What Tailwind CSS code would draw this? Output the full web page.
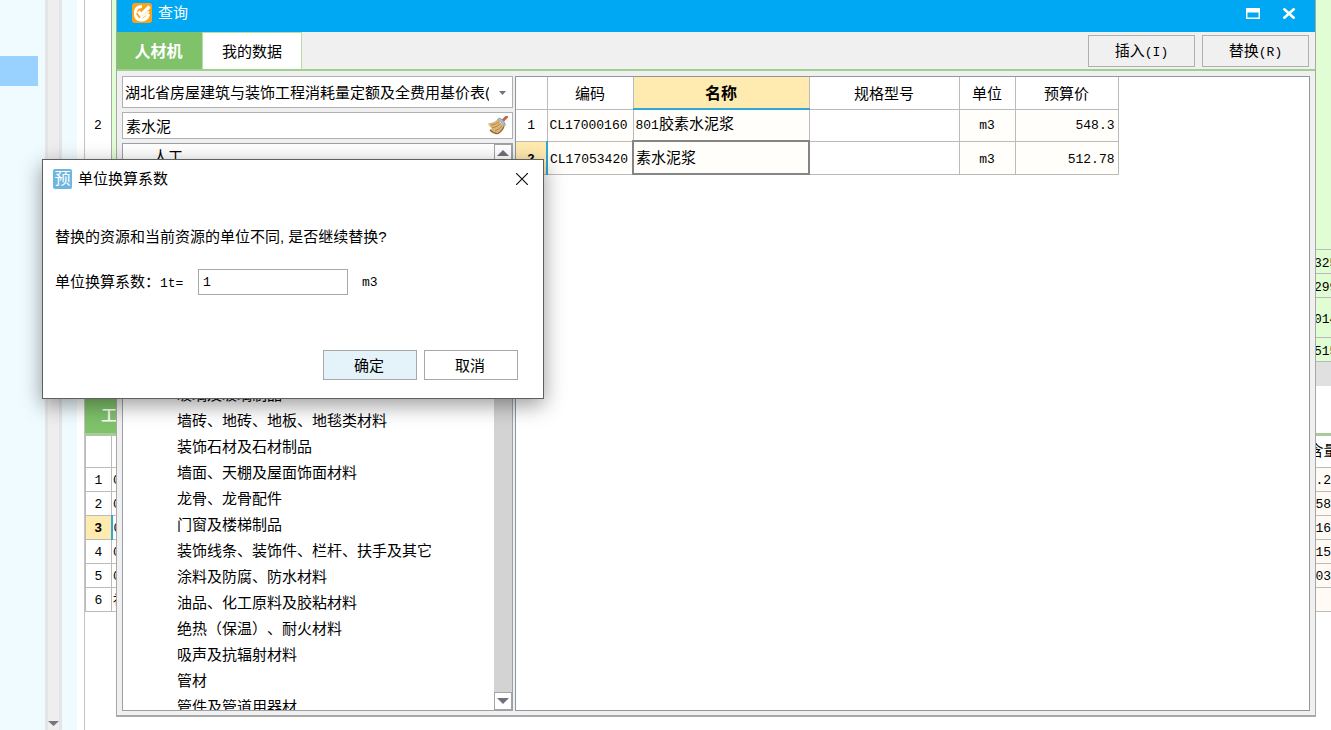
<!DOCTYPE html>
<html lang="zh-CN">
<head>
<meta charset="utf-8">
<title>查询</title>
<script src="https://cdn.jsdelivr.net/npm/@tailwindcss/browser@4"></script>
</head>
<body class="relative h-screen overflow-hidden bg-white font-['Liberation_Sans','Noto_Sans_CJK_SC',sans-serif] text-[15px] leading-5 text-black [text-spacing-trim:space-all]">

<!-- Main application behind the windows -->
<main class="flex h-full">
  <nav class="w-[45px] shrink-0 bg-[#effbff] pt-14"><div class="h-[30px] w-[38px] bg-[#99d1ff]"></div></nav>
  <div class="flex w-[17px] shrink-0 flex-col justify-end border-x-3 border-[#e5e4e6] bg-[#eeeeef] pb-1">
    <svg class="h-[5px] w-[11px]" viewBox="0 0 11 5"><path d="M0 0h11L5.500 5z" fill="#77757f"/></svg>
  </div>
  <div class="w-[15px] shrink-0 bg-[#effbff]"></div>
  <div class="w-[7px] shrink-0"></div>
  <section class="flex min-w-0 flex-1 flex-col border-l border-[#c4c4c4] font-['Liberation_Mono','Noto_Sans_CJK_SC',monospace] text-[13px]">
    <div class="flex h-[250px] shrink-0">
      <div class="flex w-[27px] items-center justify-center border-r border-[#aaa] pt-0.5">2</div>
      <div class="flex-1 border-b border-[#bcbcbc] bg-[#e1fdd3]"></div>
    </div>
    <div class="flex h-[112px] shrink-0">
      <div class="w-[27px] border-r border-[#aaa]"></div>
      <div class="flex flex-1 flex-col bg-[#e1fdd3]">
        <div class="flex h-6 items-center justify-end border-b border-[#b8b8b8] pt-1"><span class="w-[17px]">325</span></div>
        <div class="flex h-6 items-center justify-end border-b border-[#b8b8b8] pt-1"><span class="w-[17px]">299</span></div>
        <div class="flex h-10 items-center justify-end border-b border-[#b8b8b8] pt-1"><span class="w-[17px]">014</span></div>
        <div class="flex h-6 items-center justify-end border-b border-[#b8b8b8] pt-1"><span class="w-[17px]">515</span></div>
      </div>
    </div>
    <div class="h-6 shrink-0 bg-[#e0e0e0]"></div>
    <div class="flex h-[49px] shrink-0 items-end border-b-2 border-[#9fd08d]">
      <div class="h-9 w-[120px] bg-[#7fc26a] pt-2 pl-4 text-base font-medium text-white">工料机</div>
    </div>
    <table class="w-full shrink-0 table-fixed border-collapse text-center">
      <colgroup><col class="w-[26px]"><col><col class="w-[23px]"></colgroup>
      <tr class="h-8"><th class="border border-[#bbb]"></th><th class="border border-[#bbb]"></th><th class="border-y border-[#bbb] p-0 pt-0.5 text-left text-[15px] font-normal whitespace-nowrap">含量</th></tr>
      <tr class="h-6"><td class="border border-[#bbb] p-0 pt-0.5">1</td><td class="border border-[#bbb] p-0 pt-0.5 pl-px text-left">0</td><td class="border-y border-[#bbb] bg-[#fffbf4] p-0 pt-0.5 pl-[7px] text-left">.2</td></tr>
      <tr class="h-6"><td class="border border-[#bbb] p-0 pt-0.5">2</td><td class="border border-[#bbb] p-0 pt-0.5 pl-px text-left">0</td><td class="border-y border-[#bbb] bg-[#fffbf4] p-0 pt-0.5 pl-[7px] text-left">58</td></tr>
      <tr class="h-6"><td class="border border-r-2 border-[#bbb] border-r-[#2fa8d8] bg-[#ffebb0] p-0 pt-0.5 font-bold">3</td><td class="border border-[#bbb] p-0 pt-0.5 pl-px text-left">0</td><td class="border-y border-[#bbb] bg-[#fffbf4] p-0 pt-0.5 pl-[7px] text-left">16</td></tr>
      <tr class="h-6"><td class="border border-[#bbb] p-0 pt-0.5">4</td><td class="border border-[#bbb] p-0 pt-0.5 pl-px text-left">0</td><td class="border-y border-[#bbb] bg-[#fffbf4] p-0 pt-0.5 pl-[7px] text-left">15</td></tr>
      <tr class="h-6"><td class="border border-[#bbb] p-0 pt-0.5">5</td><td class="border border-[#bbb] p-0 pt-0.5 pl-px text-left">0</td><td class="border-y border-[#bbb] bg-[#fffbf4] p-0 pt-0.5 pl-[7px] text-left">03</td></tr>
      <tr class="h-6"><td class="border border-[#bbb] p-0 pt-0.5">6</td><td class="border border-[#bbb] p-0 pt-0.5 pl-px text-left">补</td><td class="border-y border-[#bbb] bg-[#fffbf4] p-0"></td></tr>
    </table>
  </section>
</main>

<!-- Query window -->
<section class="absolute top-0 right-[15px] bottom-[13px] left-[116px] flex flex-col border-x border-b-2 border-[#a8a8a8] bg-[#f0f0f0]">
  <header class="flex h-8 shrink-0 items-center bg-[#00a8f3] pr-[17px] pb-1.5 pl-[15px] text-white">
    <svg class="h-5 w-5" viewBox="0 0 20 20"><rect width="20" height="20" rx="3" fill="#f9a51c"/><path d="M10 3.500Q4 3.500 3.500 9 3 17 9 17q6 0 7.500-6" fill="none" stroke="#fff" stroke-width="3.200"/><path d="M6 9l3 3.500L18 3.500" fill="none" stroke="#f9a51c" stroke-width="5.500"/><path d="M6.500 8.500L9 12l8.500-8.500" fill="none" stroke="#fff" stroke-width="3.200"/><path d="M8 16l9-7.500" stroke="#fff" stroke-width="2"/></svg>
    <h1 class="ml-1.5 flex-1">查询</h1>
    <button aria-label="最大化" class="mr-[22px]"><svg class="h-[11px] w-[14px]" viewBox="0 0 14 11"><path d="M0 0h14v11H0zM1.500 4.500v5h11v-5z" fill="#fff" fill-rule="evenodd"/></svg></button>
    <button aria-label="关闭" class="mr-0.5"><svg class="h-[11px] w-[14px]" viewBox="0 0 14 11"><path d="M1.500 .500l11 10M12.500 .500l-11 10" stroke="#fff" stroke-width="2.600"/></svg></button>
  </header>
  <div class="flex h-[39px] shrink-0 border-b-2 border-[#9fd08d]">
    <button class="w-[85px] bg-[#7fc26a] pt-0.5 pr-0.5 text-base font-bold text-white">人材机</button>
    <button class="w-[100px] border border-b-0 border-[#b4e0a4] bg-white pt-0.5">我的数据</button>
    <div class="flex flex-1 items-center justify-end gap-[7px] pr-1.5">
      <button class="h-8 w-[107px] border border-[#b0b0b0] pt-0.5">插入<span class="font-['Liberation_Mono',monospace] text-[13px]">(I)</span></button>
      <button class="h-8 w-[107px] border border-[#b0b0b0] pt-0.5">替换<span class="font-['Liberation_Mono',monospace] text-[13px]">(R)</span></button>
    </div>
  </div>
  <div class="flex min-h-0 flex-1 gap-0.5 px-[5px] pt-[5px] pb-1">
    <div class="flex w-[391px] shrink-0 flex-col gap-1">
      <div class="relative h-8 shrink-0">
        <select aria-label="定额库" class="h-full w-full appearance-none overflow-hidden border border-[#b0b0b0] bg-white pt-0.5 pr-[23px] pl-0.5 text-clip"><option>湖北省房屋建筑与装饰工程消耗量定额及全费用基价表(2018)</option></select>
        <svg class="pointer-events-none absolute top-[15px] right-[7px] h-1 w-[7px]" viewBox="0 0 7 4"><path d="M0 0h7L3.500 4z" fill="#6d7382"/></svg>
      </div>
      <div class="relative h-[27px] shrink-0">
        <input aria-label="搜索" value="素水泥" class="h-full w-full border border-[#b0b0b0] bg-white px-[3px]">
        <button aria-label="清除" class="absolute top-1 right-1"><svg class="h-[19px] w-[22px]" viewBox="0 0 22 19"><path d="M16.500 4L19.500 1" stroke="#c0694a" stroke-width="3" stroke-linecap="round"/><path d="M1 7.500Q7 7 10.500 3.500l6.500 7q-2 5-6 7-6-1-8-4l2-1Q2 10.500 1 7.500z" fill="#dcb578"/><path d="M4 9q5-.500 8-3.500M5 12q5-1 8.500-4.500M8 15q4-1.500 7-5" stroke="#a87c42" stroke-width=".8" fill="none"/><path d="M3 14q4 4 8 3.500 4-2 6-7" stroke="#8c6530" stroke-width="1.200" fill="none"/><path d="M10.500 3.500l2-1.500Q17 3.500 18.500 9L17 10.500q-2-5-6.500-7z" fill="#b7bfc8" stroke="#7d858f" stroke-width=".7"/></svg></button>
      </div>
      <div class="flex min-h-0 flex-1 border border-[#9ba0a9] bg-white">
        <ul class="flex-1 overflow-hidden leading-[26px] whitespace-nowrap">
          <li class="pl-[30px]">人工</li>
          <li class="mt-[212px] pl-[54px]">玻璃及玻璃制品</li>
          <li class="pl-[54px]">墙砖、地砖、地板、地毯类材料</li>
          <li class="pl-[54px]">装饰石材及石材制品</li>
          <li class="pl-[54px]">墙面、天棚及屋面饰面材料</li>
          <li class="pl-[54px]">龙骨、龙骨配件</li>
          <li class="pl-[54px]">门窗及楼梯制品</li>
          <li class="pl-[54px]">装饰线条、装饰件、栏杆、扶手及其它</li>
          <li class="pl-[54px]">涂料及防腐、防水材料</li>
          <li class="pl-[54px]">油品、化工原料及胶粘材料</li>
          <li class="pl-[54px]">绝热（保温）、耐火材料</li>
          <li class="pl-[54px]">吸声及抗辐射材料</li>
          <li class="pl-[54px]">管材</li>
          <li class="pl-[54px]">管件及管道用器材</li>
        </ul>
        <div class="flex w-[18px] flex-col justify-between bg-[#d3d3d3]">
          <button aria-label="向上" class="flex h-[18px] items-center justify-center border border-[#a4a4a8] bg-white"><svg class="h-1.5 w-3" viewBox="0 0 12 6"><path d="M0 6h12L6 0z" fill="#70717f"/></svg></button>
          <button aria-label="向下" class="flex h-[18px] items-center justify-center border border-[#a4a4a8] bg-white"><svg class="h-1.5 w-3" viewBox="0 0 12 6"><path d="M0 0h12L6 6z" fill="#70717f"/></svg></button>
        </div>
      </div>
    </div>
    <div class="min-w-0 flex-1 border border-[#8f969e] bg-white">
      <table class="w-[602px] table-fixed border-collapse">
        <colgroup><col class="w-[31px]"><col class="w-[86px]"><col class="w-[176px]"><col class="w-[150px]"><col class="w-[56px]"><col class="w-[103px]"></colgroup>
        <thead>
          <tr class="h-8">
            <th class="border-r border-b border-[#bbb] p-0"></th>
            <th class="border-r border-b border-[#bbb] p-0 pt-0.5 font-normal">编码</th>
            <th class="border-r border-b-2 border-[#bbb] border-b-[#2fa8d8] bg-[#ffebb0] p-0 pt-0.5 text-base font-bold">名称</th>
            <th class="border-r border-b border-[#bbb] p-0 pt-0.5 font-normal">规格型号</th>
            <th class="border-r border-b border-[#bbb] p-0 pt-0.5 font-normal">单位</th>
            <th class="border-r border-b border-[#bbb] p-0 pt-0.5 font-normal">预算价</th>
          </tr>
        </thead>
        <tbody class="font-['Liberation_Mono','Noto_Sans_CJK_SC',monospace] text-[13px]">
          <tr class="h-8">
            <td class="border-r border-b border-[#bbb] p-0 pt-0.5 text-center">1</td>
            <td class="border-r border-b border-[#bbb] bg-[#fffefa] p-0 pt-0.5 pl-0.5">CL17000160</td>
            <td class="border-r border-b border-[#bbb] bg-[#fffefa] p-0 pt-0.5 pl-0.5">801<span class="text-[15px]">胶素水泥浆</span></td>
            <td class="border-r border-b border-[#bbb]"></td>
            <td class="border-r border-b border-[#bbb] bg-[#fffefa] p-0 pt-0.5 text-center">m3</td>
            <td class="border-r border-b border-[#bbb] bg-[#fffefa] p-0 pt-0.5 pr-[3px] text-right">548.3</td>
          </tr>
          <tr class="h-[33px]">
            <td class="border-r-2 border-b border-[#bbb] border-r-[#2fa8d8] bg-[#ffebb0] p-0 pt-1 text-center font-bold">2</td>
            <td class="border-r border-b border-[#bbb] bg-[#fffefa] p-0 pt-1 pl-0.5">CL17053420</td>
            <td class="border-2 border-[#858585] bg-[#fffefa] p-0 pt-1 pl-0.5 text-[15px]">素水泥浆</td>
            <td class="border-r border-b border-[#bbb]"></td>
            <td class="border-r border-b border-[#bbb] bg-[#fffefa] p-0 pt-1 text-center">m3</td>
            <td class="border-r border-b border-[#bbb] bg-[#fffefa] p-0 pt-1 pr-[3px] text-right">512.78</td>
          </tr>
        </tbody>
      </table>
    </div>
  </div>
</section>

<!-- Unit conversion dialog -->
<div role="dialog" aria-labelledby="dialog-title" class="absolute top-[159px] left-[42px] flex w-[502px] flex-col border border-[#5f5f5f] bg-white shadow-[0_6px_20px_rgba(0,0,0,0.4)]">
  <header class="flex h-[38px] items-center pr-[15px] pl-2.5">
    <span class="flex h-5 w-[19px] items-center justify-center rounded-xs bg-[#6db6df] text-base text-white">预</span>
    <h2 id="dialog-title" class="ml-1.5 flex-1">单位换算系数</h2>
    <button aria-label="关闭"><svg class="h-3 w-3" viewBox="0 0 12 12"><path d="M0 0l12 12M12 0L0 12" stroke="#111" stroke-width="1.200"/></svg></button>
  </header>
  <p class="mt-[29px] pl-3">替换的资源和当前资源的单位不同, 是否继续替换?</p>
  <div class="mt-[22px] flex h-[26px] items-center pl-3">
    <label for="factor" class="w-[143px] pt-0.5">单位换算系数：<span class="font-['Liberation_Mono',monospace] text-[13px]">1t=</span></label>
    <input id="factor" value="1" class="h-full w-[150px] border border-[#a8a8a8] px-1 font-['Liberation_Mono',monospace] text-[13px]">
    <span class="ml-3.5 pt-0.5 font-['Liberation_Mono',monospace] text-[13px]">m3</span>
  </div>
  <div class="mt-[55px] mb-[18px] flex justify-end gap-[7px] pr-[25px]">
    <button class="h-[30px] w-[94px] border border-[#a8a8a8] bg-[#e3f3f9] pt-0.5 pr-0.5">确定</button>
    <button class="h-[30px] w-[94px] border border-[#a8a8a8] bg-white pt-0.5 pr-0.5">取消</button>
  </div>
</div>
</body>
</html>
